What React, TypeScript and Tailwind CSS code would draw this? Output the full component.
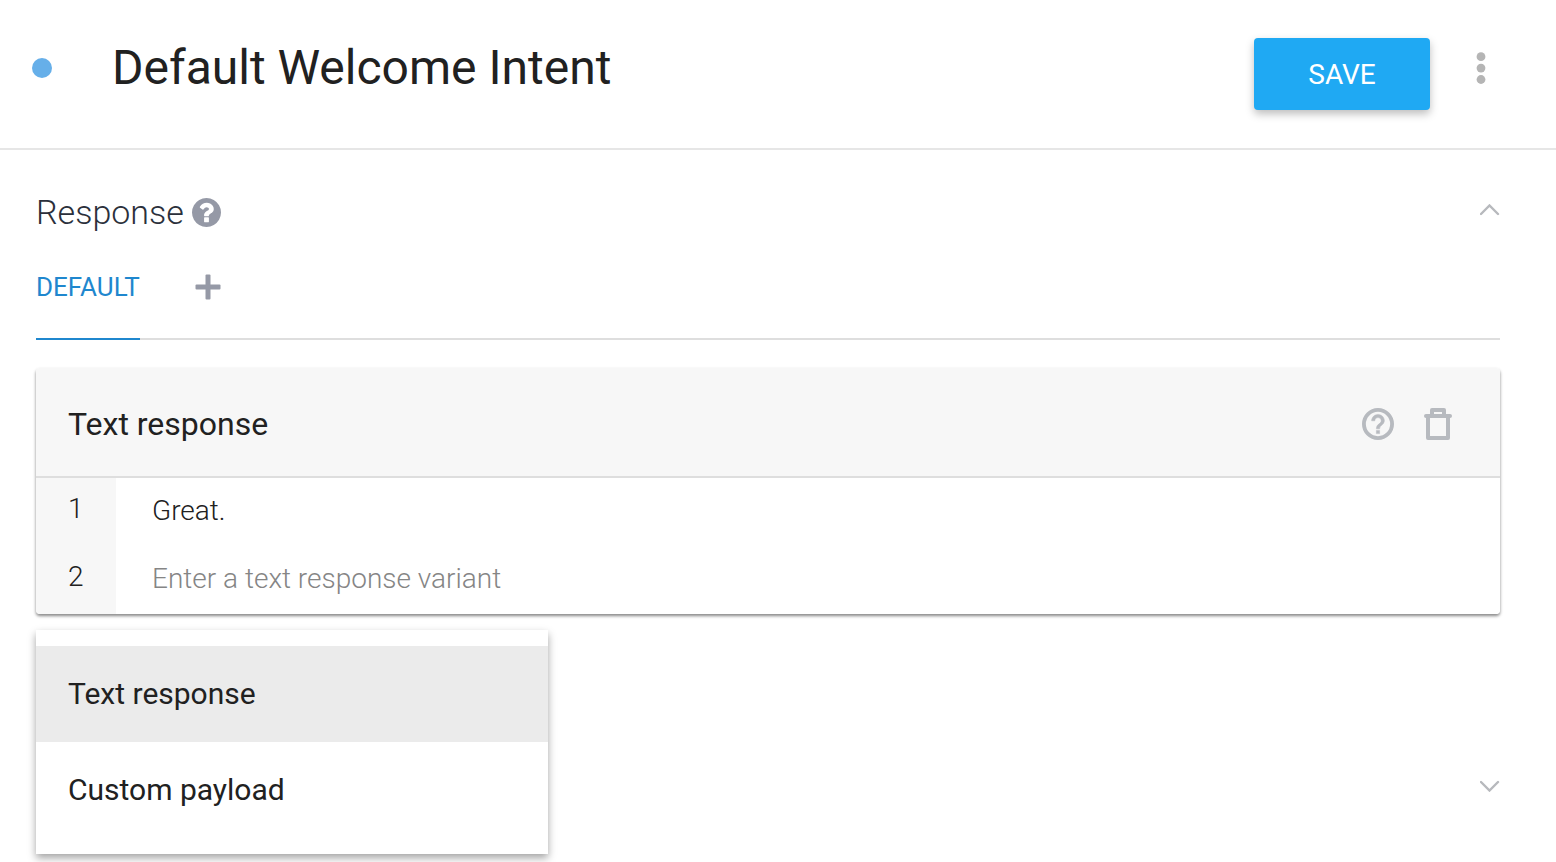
import { useState } from 'react';

const responseTypes = ['Text response', 'Custom payload'];

function HelpSolidIcon() {
  return (
    <svg viewBox="128 128 1536 1536" className="size-[29px]" fill="currentColor" aria-hidden="true">
      <path d="M1024 1376v-192q0-14-9-23t-23-9h-192q-14 0-23 9t-9 23v192q0 14 9 23t23 9h192q14 0 23-9t9-23zm256-672q0-88-55.5-163t-138.5-116-170-41q-243 0-371 213-15 24 8 42l132 100q7 6 19 6 16 0 25-12 53-68 86-92 34-24 86-24 48 0 85.5 26t37.5 59q0 38-20 61t-68 45q-63 28-115.5 86.5t-52.5 125.5v36q0 14 9 23t23 9h192q14 0 23-9t9-23q0-19 21.5-49.5t54.5-49.5q32-18 49-28.5t46-35 44.5-48 28-60.5 12.5-81zm384 192q0 209-103 385.5t-279.5 279.5-385.5 103-385.5-103-279.5-279.5-103-385.5 103-385.5 279.5-279.5 385.5-103 385.5 103 279.5 279.5 103 385.5z" />
    </svg>
  );
}

function HelpOutlineIcon() {
  return (
    <svg viewBox="2 2 20 20" className="size-8" fill="currentColor" aria-hidden="true">
      <path
        d="M11 18h2v-2h-2v2zm1-12c-2.21 0-4 1.79-4 4h2c0-1.1.9-2 2-2s2 .9 2 2c0 2-3 1.75-3 5h2c0-2.25 3-2.5 3-5 0-2.21-1.79-4-4-4z"
        stroke="currentColor"
        strokeWidth="0.3"
      />
      <circle cx="12" cy="12" r="8.8" fill="none" stroke="currentColor" strokeWidth="2.4" />
    </svg>
  );
}

function TrashIcon() {
  return (
    <svg viewBox="0 0 28 32" className="h-8 w-7" fill="none" stroke="currentColor" strokeWidth="4" aria-hidden="true">
      <path d="M2 8h24" strokeLinecap="round" />
      <path d="M8 8V2h12v6M4 8v22h20V8" strokeLinejoin="round" />
    </svg>
  );
}

function PlusIcon() {
  return (
    <svg viewBox="0 0 26 26" className="size-[26px]" fill="currentColor" aria-hidden="true">
      <rect x="0.5" y="10.5" width="25" height="5" rx="1" />
      <rect x="10.5" y="0.5" width="5" height="25" rx="1" />
    </svg>
  );
}

function DotsIcon() {
  return (
    <svg viewBox="0 0 10 32" className="h-8 w-[10px]" fill="currentColor" aria-hidden="true">
      <circle cx="5" cy="4.7" r="4.4" />
      <circle cx="5" cy="16.1" r="4.4" />
      <circle cx="5" cy="27.5" r="4.4" />
    </svg>
  );
}

function Chevron({ up }: { up: boolean }) {
  return (
    <svg viewBox="0 0 20 12" className="h-3 w-5" fill="none" stroke="currentColor" strokeWidth="2.4" strokeLinecap="round" aria-hidden="true">
      <path d={up ? 'M1 10 9.500 1.500 18 10' : 'M1 2 9.500 10.500 18 2'} />
    </svg>
  );
}

export default function App() {
  const [variants, setVariants] = useState(['Great.', '']);
  const [selected, setSelected] = useState('Text response');

  function updateVariant(index: number, value: string) {
    setVariants(variants.map((item, i) => (i === index ? value : item)));
  }

  return (
    <div className="min-h-screen bg-white font-[Roboto,sans-serif] text-[#212121]">
      <header className="flex items-start border-b-2 border-[#e6e6e6] py-[38px] pr-[70px] pl-8">
        <span className="mt-5 size-5 shrink-0 rounded-full bg-[#66afe9]" />
        <h1 className="ml-[60px] grow text-[48px] leading-[60px]">Default Welcome Intent</h1>
        <button
          type="button"
          className="h-[72px] w-44 shrink-0 rounded-sm bg-[#1fa9f3] pt-[2px] text-[28px] text-white shadow-[0_4px_8px_rgba(0,0,0,0.26)]"
        >
          SAVE
        </button>
        <button type="button" aria-label="More actions" className="mt-[14px] ml-[46px] text-[#b5b5b5]">
          <DotsIcon />
        </button>
      </header>

      <main className="pr-14 pl-9">
        <section>
          <div className="flex items-center justify-between pt-10">
            <div className="flex items-center gap-2">
              <h2 className="text-[34px] leading-[44px] font-light text-[#2b303b]">Response</h2>
              <button type="button" aria-label="About responses" className="text-[#9599a6]">
                <HelpSolidIcon />
              </button>
            </div>
            <button type="button" aria-label="Collapse section" className="pb-1 text-[#b7b9bd]">
              <Chevron up />
            </button>
          </div>

          <div role="tablist" className="mt-4 flex h-[90px] border-b-2 border-[#dedede]">
            <button
              type="button"
              role="tab"
              aria-selected="true"
              className="-mb-[2px] border-b-2 border-[#1f87ce] pb-[14px] text-[26px] text-[#1f87ce]"
            >
              DEFAULT
            </button>
            <button type="button" aria-label="Add integration" className="ml-[55px] pb-[14px] text-[#9599a6]">
              <PlusIcon />
            </button>
          </div>

          <div className="mt-7 overflow-hidden rounded-sm shadow-[0_2px_3px_rgba(0,0,0,0.4),0_2px_4px_rgba(0,0,0,0.1)]">
            <div className="flex h-[110px] items-center border-b-2 border-[#dedede] bg-[#f7f7f7] pt-[3px] pr-12 pl-8">
              <h3 className="grow text-[32px] leading-10">{selected}</h3>
              <div className="flex gap-[30px] text-[#b7babf]">
                <button type="button" aria-label="Help">
                  <HelpOutlineIcon />
                </button>
                <button type="button" aria-label="Delete response">
                  <TrashIcon />
                </button>
              </div>
            </div>
            {variants.map((variant, index) => (
              <div key={index} className="flex h-[68px] text-[28px] font-light">
                <label htmlFor={`variant-${index}`} className="w-20 shrink-0 bg-[#f7f7f7] pl-8 leading-[62px]">
                  {index + 1}
                </label>
                <input
                  id={`variant-${index}`}
                  type="text"
                  value={variant}
                  placeholder="Enter a text response variant"
                  onChange={(event) => updateVariant(index, event.target.value)}
                  className="min-w-0 grow bg-white pb-[2px] pl-9 font-light outline-none placeholder:text-[#858585]"
                />
              </div>
            ))}
          </div>
        </section>

        <section className="relative flex h-[248px] items-start justify-end pt-[166px]">
          <div
            role="menu"
            className="absolute top-4 left-0 h-56 w-[512px] bg-white py-4 shadow-[0_4px_8px_rgba(0,0,0,0.36)]"
          >
            {responseTypes.map((type) => (
              <button
                key={type}
                type="button"
                role="menuitem"
                onClick={() => setSelected(type)}
                className={`block h-24 w-full px-8 pb-[2px] text-left text-[30px] ${type === selected ? 'bg-[#ebebeb]' : 'bg-white'}`}
              >
                {type}
              </button>
            ))}
          </div>
          <button type="button" aria-label="Expand section" className="text-[#b7b9bd]">
            <Chevron up={false} />
          </button>
        </section>
      </main>
    </div>
  );
}
